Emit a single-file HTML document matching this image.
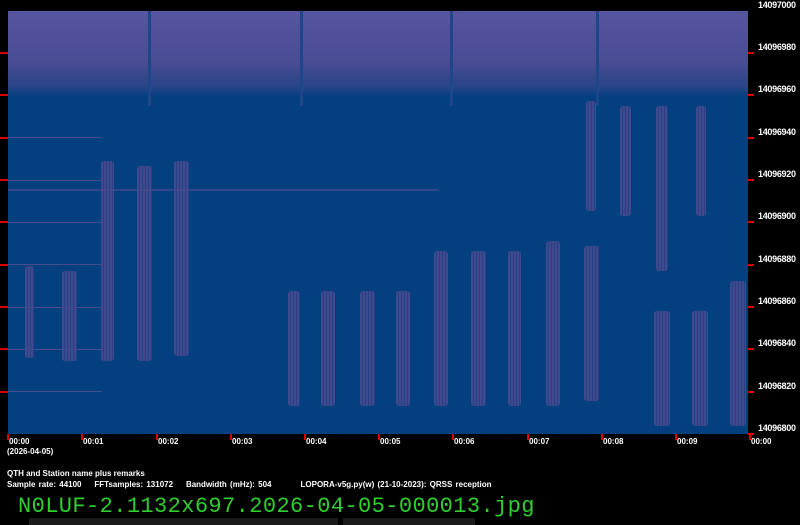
<!DOCTYPE html>
<html><head><style>
body{margin:0;width:800px;height:525px;background:#000;position:relative;overflow:hidden;font-family:"Liberation Sans",sans-serif}
.a{position:absolute}
#plot{left:8px;top:11px;width:740px;height:423px;background:#043f80;overflow:hidden}
.band{left:0;top:0;width:740px;height:85px;background:linear-gradient(#5756a0 0,#50509a 30%,#4a4c94 60%,#2a4588 88%,#043f80 100%)}
.gap{top:0;width:3px;height:95px;background:#1e4688}
.s{background:repeating-linear-gradient(90deg,#4b4a90 0 2px,#2f4386 2px 3px);opacity:.85;border-radius:3px}
.h{height:1px;background:#4a4a8e;left:0;width:94px}
.lt{left:0;width:8px;height:2px;background:#d00}
.rt{left:748px;width:6px;height:2px;background:#d00}
.rl{left:758px;color:#fff;font-size:9px;font-weight:bold;letter-spacing:-.3px}
.tl{top:437px;color:#fff;font-size:8px;font-weight:bold}
.tk{top:434px;width:2px;height:6px;background:#d00}
.t{color:#fff;font-size:8px;font-weight:bold}
</style></head><body>
<div id="plot" class="a">
<div class="a band"></div>
<div class="a gap" style="left:140px"></div><div class="a gap" style="left:292px"></div><div class="a gap" style="left:442px"></div><div class="a gap" style="left:588px"></div>
<div class="a h" style="top:126px"></div><div class="a h" style="top:169px"></div><div class="a h" style="top:211px"></div><div class="a h" style="top:253px"></div><div class="a h" style="top:296px"></div><div class="a h" style="top:338px"></div><div class="a h" style="top:380px"></div>
<div class="a s" style="left:17px;top:255px;width:9px;height:92px"></div>
<div class="a s" style="left:54px;top:260px;width:15px;height:90px"></div>
<div class="a s" style="left:93px;top:150px;width:13px;height:200px"></div>
<div class="a s" style="left:129px;top:155px;width:15px;height:195px"></div>
<div class="a s" style="left:166px;top:150px;width:15px;height:195px"></div>
<div class="a s" style="left:280px;top:280px;width:12px;height:115px"></div>
<div class="a s" style="left:313px;top:280px;width:14px;height:115px"></div>
<div class="a s" style="left:352px;top:280px;width:15px;height:115px"></div>
<div class="a s" style="left:388px;top:280px;width:14px;height:115px"></div>
<div class="a s" style="left:426px;top:240px;width:14px;height:155px"></div>
<div class="a s" style="left:463px;top:240px;width:15px;height:155px"></div>
<div class="a s" style="left:500px;top:240px;width:13px;height:155px"></div>
<div class="a s" style="left:538px;top:230px;width:14px;height:165px"></div>
<div class="a s" style="left:576px;top:235px;width:15px;height:155px"></div>
<div class="a s" style="left:578px;top:90px;width:10px;height:110px"></div>
<div class="a s" style="left:612px;top:95px;width:11px;height:110px"></div>
<div class="a s" style="left:648px;top:95px;width:12px;height:165px"></div>
<div class="a s" style="left:646px;top:300px;width:16px;height:115px"></div>
<div class="a s" style="left:684px;top:300px;width:16px;height:115px"></div>
<div class="a s" style="left:688px;top:95px;width:10px;height:110px"></div>
<div class="a s" style="left:722px;top:270px;width:16px;height:145px"></div>
<div class="a" style="left:0;top:178px;width:430px;height:2px;background:#4a4a8e;opacity:.7"></div>
</div>
<div class="a lt" style="top:52px"></div><div class="a lt" style="top:94px"></div><div class="a lt" style="top:137px"></div><div class="a lt" style="top:179px"></div><div class="a lt" style="top:221px"></div><div class="a lt" style="top:264px"></div><div class="a lt" style="top:306px"></div><div class="a lt" style="top:348px"></div><div class="a lt" style="top:391px"></div>
<div class="a rt" style="top:52px"></div><div class="a rt" style="top:94px"></div><div class="a rt" style="top:137px"></div><div class="a rt" style="top:179px"></div><div class="a rt" style="top:221px"></div><div class="a rt" style="top:264px"></div><div class="a rt" style="top:306px"></div><div class="a rt" style="top:348px"></div><div class="a rt" style="top:391px"></div><div class="a rt" style="top:433px"></div>
<div class="a rl" style="top:0">14097000</div>
<div class="a rl" style="top:42px">14096980</div>
<div class="a rl" style="top:84px">14096960</div>
<div class="a rl" style="top:127px">14096940</div>
<div class="a rl" style="top:169px">14096920</div>
<div class="a rl" style="top:211px">14096900</div>
<div class="a rl" style="top:254px">14096880</div>
<div class="a rl" style="top:296px">14096860</div>
<div class="a rl" style="top:338px">14096840</div>
<div class="a rl" style="top:381px">14096820</div>
<div class="a rl" style="top:423px">14096800</div>
<div class="a tk" style="left:7px"></div><div class="a tk" style="left:81px"></div><div class="a tk" style="left:156px"></div><div class="a tk" style="left:230px"></div><div class="a tk" style="left:304px"></div><div class="a tk" style="left:378px"></div><div class="a tk" style="left:452px"></div><div class="a tk" style="left:527px"></div><div class="a tk" style="left:601px"></div><div class="a tk" style="left:675px"></div><div class="a tk" style="left:749px"></div>
<div class="a tl" style="left:9px">00:00</div><div class="a tl" style="left:83px">00:01</div><div class="a tl" style="left:158px">00:02</div><div class="a tl" style="left:232px">00:03</div><div class="a tl" style="left:306px">00:04</div><div class="a tl" style="left:380px">00:05</div><div class="a tl" style="left:454px">00:06</div><div class="a tl" style="left:529px">00:07</div><div class="a tl" style="left:603px">00:08</div><div class="a tl" style="left:677px">00:09</div><div class="a tl" style="left:751px">00:00</div>
<div class="a t" style="left:7px;top:447px">(2026-04-05)</div>
<div class="a t" style="left:7px;top:469px">QTH and Station name plus remarks</div>
<div class="a t" style="left:7px;top:480px;word-spacing:1px">Sample rate: 44100 &nbsp;&nbsp; FFTsamples: 131072 &nbsp;&nbsp; Bandwidth (mHz): 504 &nbsp;&nbsp;&nbsp;&nbsp;&nbsp;&nbsp;&nbsp; LOPORA-v5g.py(w) (21-10-2023): QRSS reception</div>
<div class="a" style="left:18px;top:494px;color:#2ed02e;font-family:'Liberation Mono',monospace;font-size:22px;letter-spacing:0.4px">N0LUF-2.1132x697.2026-04-05-000013.jpg</div>
<div class="a" style="left:29px;top:518px;width:309px;height:7px;background:#1a1a1a"></div>
<div class="a" style="left:343px;top:518px;width:132px;height:7px;background:#1a1a1a"></div>
</body></html>
